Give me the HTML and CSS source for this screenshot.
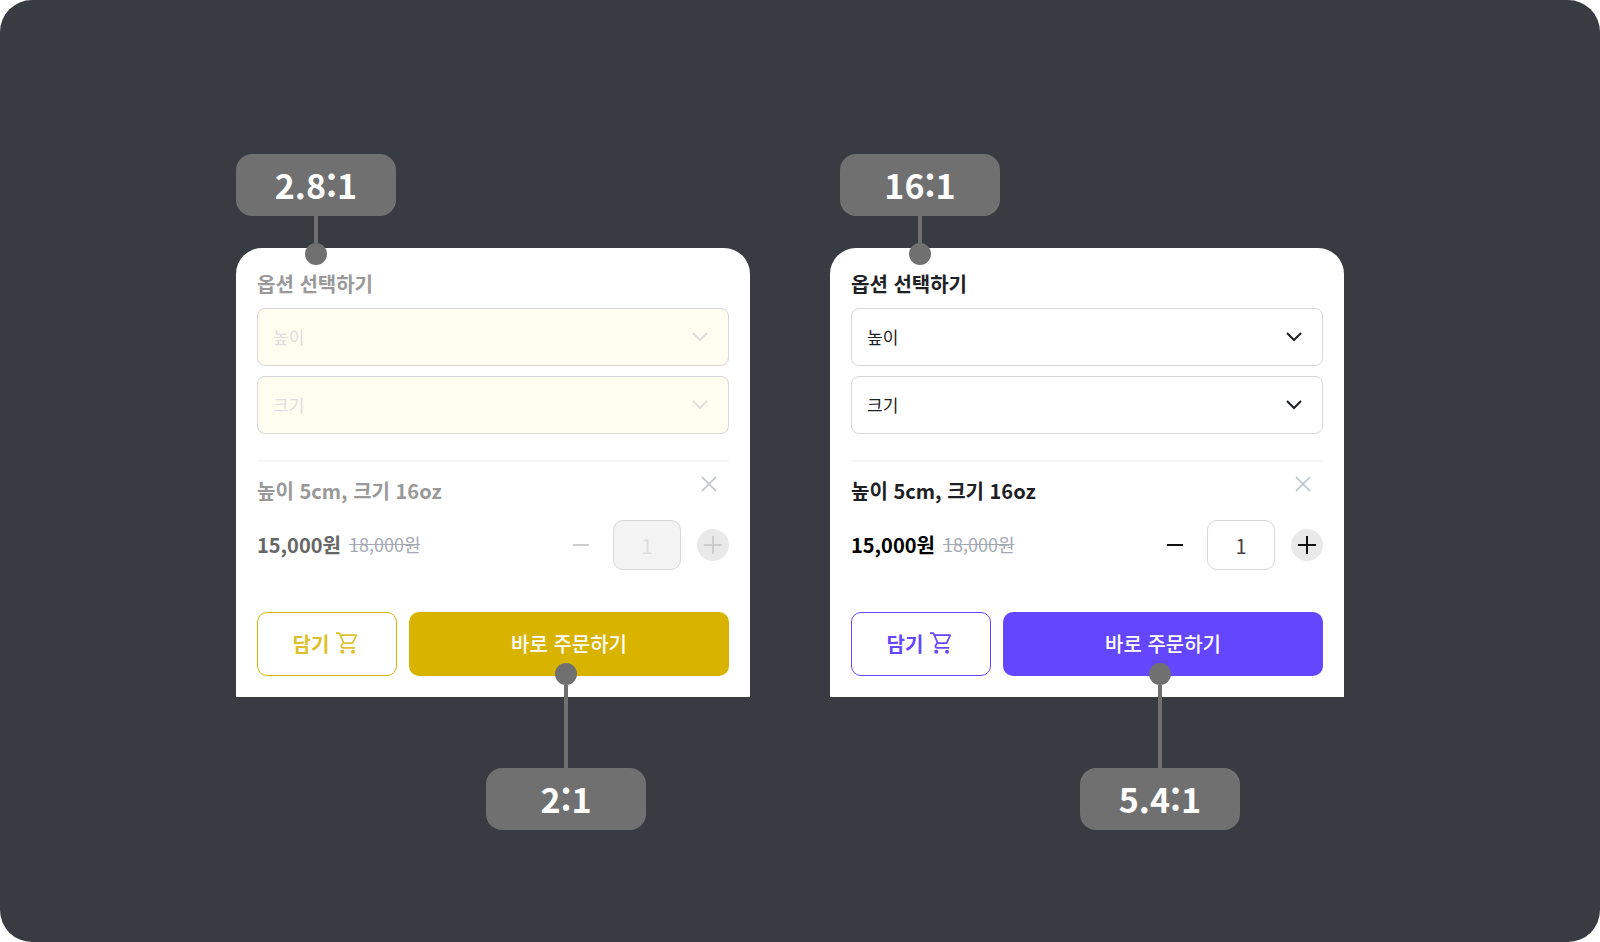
FILE: index.html
```html
<!DOCTYPE html>
<html lang="ko">
<head>
<meta charset="utf-8">
<meta name="viewport" content="width=device-width, initial-scale=1">
<title>옵션 선택하기</title>
<link rel="stylesheet" href="styles.css">
</head>
<body>
<svg class="sprite" aria-hidden="true">
  <symbol id="chevron" viewBox="0 0 16 10"><path d="M1 1l7 7 7-7" fill="none" stroke="currentColor" stroke-width="2"/></symbol>
  <symbol id="close" viewBox="0 0 16 16"><path d="M1.400 1.400l13.200 13.200M14.600 1.400L1.400 14.600" fill="none" stroke="currentColor" stroke-width="1.500" stroke-linecap="round"/></symbol>
  <symbol id="minus" viewBox="0 0 16 16"><path d="M0 8h16" stroke="currentColor" stroke-width="2"/></symbol>
  <symbol id="plus" viewBox="0 0 18 18"><path d="M0 9h18M9 0v18" stroke="currentColor" stroke-width="2"/></symbol>
  <symbol id="cart" viewBox="0 0 22 22"><path d="M0 1.200h3.400l4.200 9.400-1.900 2.600c-.8 1.300 0 2.600 1.400 2.600h12M4.300 3.100h16l-3.700 8.100H8" fill="none" stroke="currentColor" stroke-width="1.700" stroke-linejoin="round"/><circle cx="6.300" cy="19.800" r="2" fill="currentColor"/><circle cx="17" cy="19.800" r="2" fill="currentColor"/></symbol>
</svg>
<main class="stage">
  <section class="sheet sheet--low">
    <h2 class="title">옵션 선택하기</h2>
    <div class="options">
      <div class="picker"><select class="select" aria-label="높이"><option>높이</option></select><svg class="chevron"><use href="#chevron"/></svg></div>
      <div class="picker"><select class="select" aria-label="크기"><option>크기</option></select><svg class="chevron"><use href="#chevron"/></svg></div>
    </div>
    <div class="item">
      <h3 class="title">높이 5cm, 크기 16oz</h3>
      <button class="close" type="button" aria-label="삭제"><svg><use href="#close"/></svg></button>
    </div>
    <div class="order">
      <p class="price"><strong class="now">15,000원</strong><s class="was">18,000원</s></p>
      <div class="stepper">
        <button class="step" type="button" aria-label="수량 줄이기"><svg class="minus"><use href="#minus"/></svg></button>
        <input class="count" type="text" inputmode="numeric" value="1" aria-label="수량">
        <button class="step step--plus" type="button" aria-label="수량 늘리기"><svg class="plus"><use href="#plus"/></svg></button>
      </div>
    </div>
    <div class="actions">
      <button class="button button--cart" type="button">담기<svg class="cart"><use href="#cart"/></svg></button>
      <button class="button button--buy" type="button">바로 주문하기</button>
    </div>
    <div class="callout callout--top"><span class="ratio">2.8:1</span></div>
    <div class="callout callout--bottom"><span class="ratio">2:1</span></div>
  </section>
  <section class="sheet sheet--high">
    <h2 class="title">옵션 선택하기</h2>
    <div class="options">
      <div class="picker"><select class="select" aria-label="높이"><option>높이</option></select><svg class="chevron"><use href="#chevron"/></svg></div>
      <div class="picker"><select class="select" aria-label="크기"><option>크기</option></select><svg class="chevron"><use href="#chevron"/></svg></div>
    </div>
    <div class="item">
      <h3 class="title">높이 5cm, 크기 16oz</h3>
      <button class="close" type="button" aria-label="삭제"><svg><use href="#close"/></svg></button>
    </div>
    <div class="order">
      <p class="price"><strong class="now">15,000원</strong><s class="was">18,000원</s></p>
      <div class="stepper">
        <button class="step" type="button" aria-label="수량 줄이기"><svg class="minus"><use href="#minus"/></svg></button>
        <input class="count" type="text" inputmode="numeric" value="1" aria-label="수량">
        <button class="step step--plus" type="button" aria-label="수량 늘리기"><svg class="plus"><use href="#plus"/></svg></button>
      </div>
    </div>
    <div class="actions">
      <button class="button button--cart" type="button">담기<svg class="cart"><use href="#cart"/></svg></button>
      <button class="button button--buy" type="button">바로 주문하기</button>
    </div>
    <div class="callout callout--top callout--inset"><span class="ratio">16:1</span></div>
    <div class="callout callout--bottom"><span class="ratio">5.4:1</span></div>
  </section>
</main>
</body>
</html>
```
FILE: styles.css
```css
* { box-sizing: border-box; }
body {
  margin: 0;
  background: #fff;
  font-family: "Noto Sans CJK KR", sans-serif;
}
h2, h3, p { margin: 0; }
button, input, select { font: inherit; color: inherit; margin: 0; }
button { padding: 0; border: 0; background: none; cursor: pointer; }
svg { display: block; }
.sprite { position: absolute; width: 0; height: 0; }

.stage {
  display: flex;
  justify-content: center;
  align-items: center;
  gap: 80px;
  min-height: 100vh;
  padding: 3px 20px 0 0;
  border-radius: 32px;
  background: #393b43;
}

.sheet {
  position: relative;
  flex: 0 1 514px;
  padding: 21px;
  border-radius: 26px 26px 0 0;
  background: #fff;
}
.sheet--low {
  --accent: #d8b400;
  --accent-text: #dec02c;
  --heading: #999;
  --now: #666;
  --field: #fffcf0;
  --field-text: #dedede;
  --count: #f3f3f3;
  --count-text: #dedede;
  --sign: #cdcdcd;
}
.sheet--high {
  --accent: #6446ff;
  --accent-text: #6446ff;
  --heading: #1e2124;
  --now: #000;
  --field: #fff;
  --field-text: #1e2124;
  --count: #fff;
  --count-text: #444;
  --sign: #111;
}

.title {
  color: var(--heading);
  font-size: 20px;
  line-height: 30px;
  font-weight: 700;
}
.options {
  display: flex;
  flex-direction: column;
  gap: 10px;
  margin-top: 9px;
  padding-bottom: 26px;
  border-bottom: 2px solid #f5f5f6;
}
.picker {
  display: grid;
  align-items: center;
  color: var(--field-text);
}
.picker > * { grid-area: 1 / 1; }
.select {
  appearance: none;
  width: 100%;
  height: 58px;
  padding: 0 15px 2px;
  border: 1px solid #d4d8da;
  border-radius: 8px;
  background: var(--field);
  font-size: 17px;
}
.chevron {
  justify-self: end;
  width: 16px;
  height: 10px;
  margin-right: 21px;
  pointer-events: none;
}

.item {
  display: flex;
  justify-content: space-between;
  align-items: flex-start;
  padding-top: 14px;
}
.close {
  margin-right: 12px;
  color: #bec4cc;
}
.close svg { width: 16px; height: 16px; }

.order {
  display: flex;
  justify-content: space-between;
  align-items: center;
  margin-top: 14px;
}
.price {
  display: flex;
  align-items: center;
  gap: 8px;
}
.now { color: var(--now); font-size: 20px; line-height: 30px; }
.was { padding-bottom: 2px; color: #a5a9b4; font-size: 18px; line-height: 28px; }
.stepper {
  display: flex;
  align-items: center;
  gap: 16px;
  color: var(--sign);
}
.step {
  display: grid;
  place-items: center;
  width: 32px;
  height: 32px;
  border-radius: 50%;
}
.step--plus { background: #e9e9e9; }
.minus { width: 16px; height: 16px; }
.plus { width: 18px; height: 18px; }
.count {
  width: 68px;
  height: 50px;
  padding: 0;
  border: 1px solid #d4d8da;
  border-radius: 10px;
  background: var(--count);
  color: var(--count-text);
  font-size: 20px;
  text-align: center;
}

.actions {
  display: flex;
  gap: 12px;
  margin-top: 42px;
}
.button {
  display: flex;
  justify-content: center;
  align-items: center;
  gap: 7px;
  height: 64px;
  padding-bottom: 2px;
  border-radius: 10px;
  font-size: 20px;
  font-weight: 500;
}
.button--cart {
  flex: 0 0 140px;
  padding-right: 3px;
  border: 1px solid var(--accent);
  color: var(--accent-text);
  font-weight: 700;
}
.button--buy {
  flex: 1;
  background: var(--accent);
  color: #fff;
}
.cart { width: 22px; height: 22px; }

/* Contrast-ratio callouts pinned over the sheet */
.callout {
  position: absolute;
  display: flex;
  flex-direction: column;
  align-items: center;
  width: 160px;
}
.callout::before,
.callout::after { content: ""; background: #707070; }
.callout::before { width: 4px; }
.callout::after { width: 22px; height: 22px; border-radius: 50%; }
.callout--top { left: 0; top: -94px; }
.callout--top::before { order: 1; height: 27px; }
.callout--top::after { order: 2; }
.callout--inset { left: 10px; }
.callout--bottom { left: 250px; top: 415px; }
.callout--bottom::before { order: 1; height: 83px; }
.callout--bottom .ratio { order: 2; }
.ratio {
  width: 100%;
  border-radius: 16px;
  background: #707070;
  color: #fff;
  font-size: 34px;
  line-height: 62px;
  font-weight: 700;
  text-align: center;
}
```
